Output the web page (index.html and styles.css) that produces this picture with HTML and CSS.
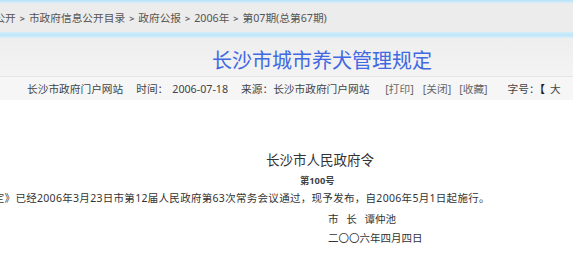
FILE: index.html
```html
<!DOCTYPE html>
<html lang="zh-CN">
<head>
<meta charset="utf-8">
<title>长沙市城市养犬管理规定</title>
<link rel="stylesheet" href="styles.css">
</head>
<body>
<div class="page">
  <div class="topline"></div>
  <div class="crumb">
    <span class="crumb-inner">信息公开<span class="sep">&gt;</span>市政府信息公开目录<span class="sep">&gt;</span>政府公报<span class="sep">&gt;</span>2006年<span class="sep">&gt;</span>第07期(总第67期)</span>
  </div>
  <div class="band"></div>
  <div class="head">
    <h1 class="title">长沙市城市养犬管理规定</h1>
  </div>
  <div class="info">
    <span class="i-site">长沙市政府门户网站</span>
    <span class="i-time">时间：<span class="date">2006-07-18</span></span>
    <span class="i-src">来源：长沙市政府门户网站</span>
    <span class="i-act i-print">[打印]</span>
    <span class="i-act i-close">[关闭]</span>
    <span class="i-act i-fav">[收藏]</span>
    <span class="i-size">字号：<span class="br">【</span><span class="big">大</span></span>
  </div>
  <div class="content">
    <div class="order">长沙市人民政府令</div>
    <div class="num">第100号</div>
    <p class="para">《长沙市城市养犬管理规定》已经2006年3月23日市第12届人民政府第63次常务会议通过，现予发布，自2006年5月1日起施行。</p>
    <div class="sign">市 长 谭仲池</div>
    <div class="sign">二〇〇六年四月四日</div>
  </div>
</div>
</body>
</html>
```

FILE: styles.css
```css
html, body {
  margin: 0;
  padding: 0;
  background: #fff;
}
body {
  font-family: "Noto Sans", "Noto Sans CJK SC", sans-serif;
  overflow: hidden;
}
.page {
  width: 573px;
  height: 257px;
  overflow: hidden;
}
.topline {
  height: 3px;
  background: linear-gradient(#b9e2f6, #d6eef9);
}
.crumb {
  height: 29px;
  background: #ececec;
  font-size: 10.7px;
  line-height: 29px;
  color: #555;
  white-space: nowrap;
  overflow: hidden;
}
.crumb-inner {
  display: inline-block;
  margin-left: -27px;
  padding-top: 1px;
}
.sep {
  display: inline-block;
  margin: 0 4px 0 4px;
  font-weight: bold;
  font-size: 9px;
  color: #666;
}
.band {
  height: 6px;
  background: linear-gradient(#d4eefa, #bfe4f7 50%, #d8effa);
}
.head {
  height: 38px;
  background: linear-gradient(#eeeeee, #f3f3f3);
  border-bottom: 1px solid #e6e6e6;
}
.title {
  margin: 0;
  padding: 4px 0 0 212px;
  font-family: "Noto Sans CJK SC", sans-serif;
  font-size: 20px;
  line-height: 36px;
  font-weight: normal;
  color: #4169e1;
  white-space: nowrap;
}
.info {
  height: 23px;
  background: #f6f6f6;
  display: flex;
  align-items: center;
  font-size: 10.7px;
  color: #444;
  white-space: nowrap;
  padding-left: 27px;
}
.i-time { margin-left: 13px; }
.date { margin-left: 4px; }
.i-src { margin-left: 13px; }
.i-act { color: #666; }
.i-print { margin-left: 16px; }
.i-close { margin-left: 9px; }
.i-fav { margin-left: 8px; }
.i-size { margin-left: 20px; }
.br { font-weight: bold; color: #222; }
.big { margin-left: 5px; }
.content {
  padding-top: 51px;
  color: #333;
  white-space: nowrap;
}
.order {
  margin-left: 266px;
  font-size: 13.5px;
  line-height: 19px;
}
.num {
  margin: 1px 0 0 300px;
  font-size: 9.3px;
  line-height: 19px;
  font-weight: bold;
  color: #444;
}
.para {
  margin: 0 0 2.5px -125px;
  font-size: 10.5px;
  line-height: 17px;
  letter-spacing: 0.3px;
}
.sign {
  margin-left: 328px;
  font-size: 10.5px;
  line-height: 19.5px;
  word-spacing: 5px;
}
```
